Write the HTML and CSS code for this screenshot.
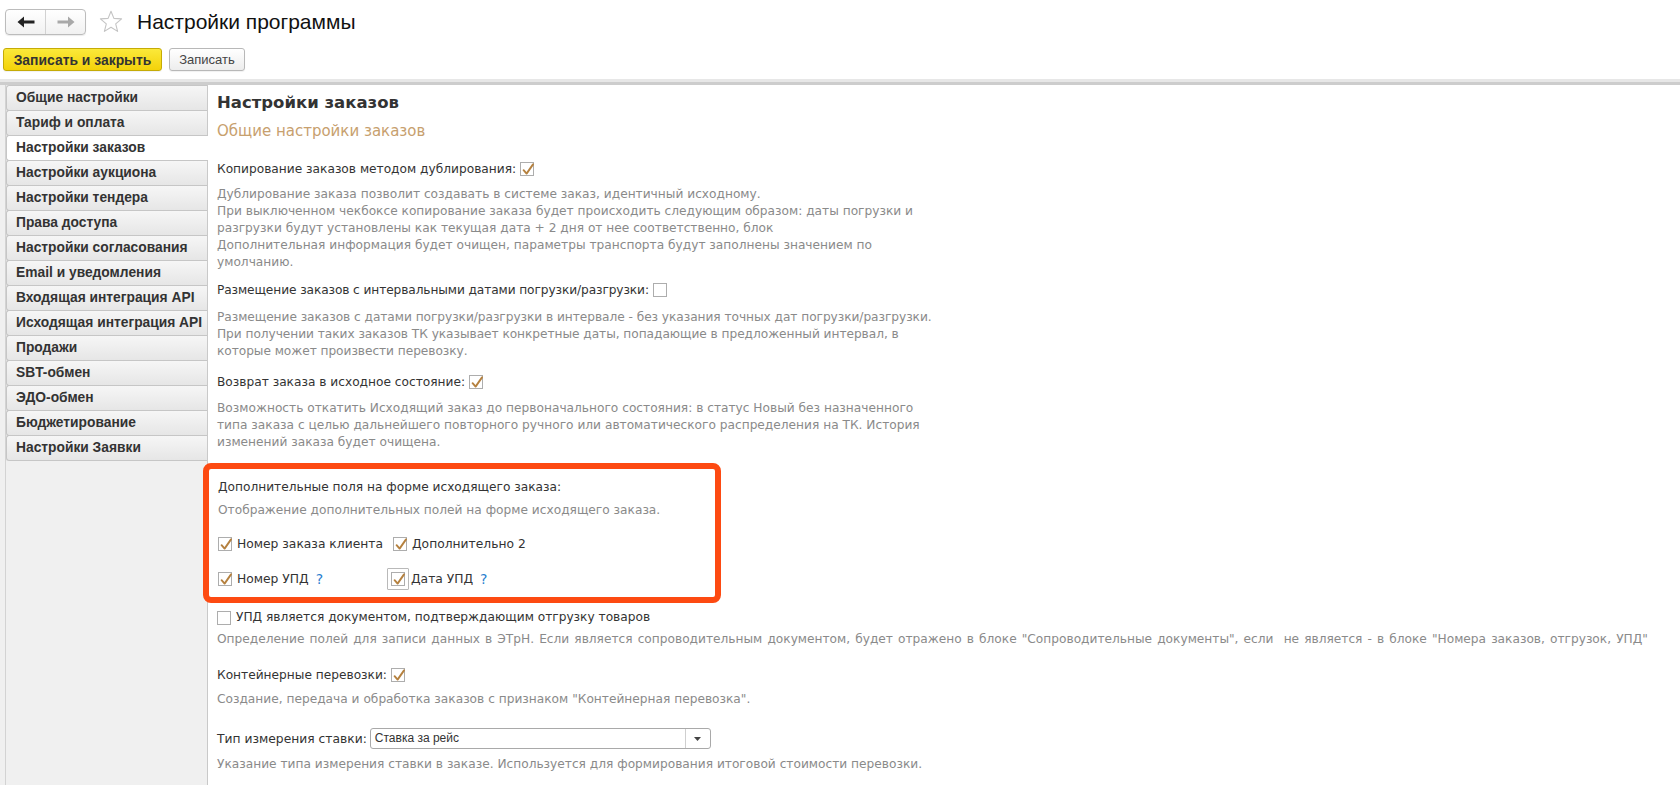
FILE: index.html
```html
<!DOCTYPE html>
<html lang="ru">
<head>
<meta charset="utf-8">
<title>Настройки программы</title>
<link rel="stylesheet" href="styles.css">
</head>
<body>
<div class="app">
  <header class="titlebar">
    <div class="nav">
      <button class="nav-btn back" type="button">
        <svg width="18" height="12" viewBox="0 0 18 12"><path d="M0.5 6 L7 0.5 V4.4 H17.5 V7.6 H7 V11.5 Z" fill="#222"/></svg>
      </button>
      <button class="nav-btn fwd" type="button">
        <svg width="18" height="12" viewBox="0 0 18 12"><path d="M17.5 6 L11 0.5 V4.4 H0.5 V7.6 H11 V11.5 Z" fill="#a9a9a9"/></svg>
      </button>
    </div>
    <svg class="star" width="24" height="24" viewBox="0 0 24 24"><polygon points="12,1.2 14.9,8.4 22.6,8.9 16.7,13.8 18.6,21.4 12,17.2 5.4,21.4 7.3,13.8 1.4,8.9 9.1,8.4" fill="none" stroke="#c4c4c4" stroke-width="1.1" stroke-linejoin="round"/></svg>
    <h1 class="title">Настройки программы</h1>
  </header>

  <div class="toolbar">
    <button class="btn btn-primary" type="button">Записать и закрыть</button>
    <button class="btn" type="button">Записать</button>
  </div>
  <div class="sep"></div>

  <div class="main">
    <nav class="sidebar">
      <ul class="tabs">
        <li class="tab">Общие настройки</li>
        <li class="tab">Тариф и оплата</li>
        <li class="tab active">Настройки заказов</li>
        <li class="tab">Настройки аукциона</li>
        <li class="tab">Настройки тендера</li>
        <li class="tab">Права доступа</li>
        <li class="tab">Настройки согласования</li>
        <li class="tab">Email и уведомления</li>
        <li class="tab">Входящая интеграция API</li>
        <li class="tab">Исходящая интеграция API</li>
        <li class="tab">Продажи</li>
        <li class="tab">SBT-обмен</li>
        <li class="tab">ЭДО-обмен</li>
        <li class="tab">Бюджетирование</li>
        <li class="tab">Настройки Заявки</li>
      </ul>
    </nav>

    <section class="content">
      <h2 class="heading">Настройки заказов</h2>
      <h3 class="subheading">Общие настройки заказов</h3>

      <div class="field f1">Копирование заказов методом дублирования: <span class="cb"><svg viewBox="0 0 14 14"><path d="M2.6 7.2 L5.6 10.6 L12 1.4"/></svg></span></div>
      <p class="desc d1">Дублирование заказа позволит создавать в системе заказ, идентичный исходному.<br>При выключенном чекбоксе копирование заказа будет происходить следующим образом: даты погрузки и<br>разгрузки будут установлены как текущая дата + 2 дня от нее соответственно, блок<br>Дополнительная информация будет очищен, параметры транспорта будут заполнены значением по<br>умолчанию.</p>

      <div class="field f2">Размещение заказов с интервальными датами погрузки/разгрузки: <span class="cb empty"></span></div>
      <p class="desc d2">Размещение заказов с датами погрузки/разгрузки в интервале - без указания точных дат погрузки/разгрузки.<br>При получении таких заказов ТК указывает конкретные даты, попадающие в предложенный интервал, в<br>которые может произвести перевозку.</p>

      <div class="field f3">Возврат заказа в исходное состояние: <span class="cb"><svg viewBox="0 0 14 14"><path d="M2.6 7.2 L5.6 10.6 L12 1.4"/></svg></span></div>
      <p class="desc d3">Возможность откатить Исходящий заказ до первоначального состояния: в статус Новый без назначенного<br>типа заказа с целью дальнейшего повторного ручного или автоматического распределения на ТК. История<br>изменений заказа будет очищена.</p>

      <div class="highlight">
        <div class="field hl-title">Дополнительные поля на форме исходящего заказа:</div>
        <p class="desc hl-desc">Отображение дополнительных полей на форме исходящего заказа.</p>
        <div class="cb-row r1">
          <label class="cb-item first"><span class="cb"><svg viewBox="0 0 14 14"><path d="M2.6 7.2 L5.6 10.6 L12 1.4"/></svg></span><span class="cb-text">Номер заказа клиента</span></label>
          <label class="cb-item"><span class="cb"><svg viewBox="0 0 14 14"><path d="M2.6 7.2 L5.6 10.6 L12 1.4"/></svg></span><span class="cb-text">Дополнительно 2</span></label>
        </div>
        <div class="cb-row r2">
          <label class="cb-item first"><span class="cb"><svg viewBox="0 0 14 14"><path d="M2.6 7.2 L5.6 10.6 L12 1.4"/></svg></span><span class="cb-text">Номер УПД</span><span class="hint">?</span></label>
          <label class="cb-item focused"><span class="focus-frame"><span class="cb"><svg viewBox="0 0 14 14"><path d="M2.6 7.2 L5.6 10.6 L12 1.4"/></svg></span></span><span class="cb-text">Дата УПД</span><span class="hint">?</span></label>
        </div>
      </div>

      <label class="field cb-line f4"><span class="cb empty"></span><span class="cb-text">УПД является документом, подтверждающим отгрузку товаров</span></label>
      <p class="desc d4">Определение полей для записи данных в ЭТрН. Если является сопроводительным документом, будет отражено в блоке "Сопроводительные документы", если&nbsp; не является - в блоке "Номера заказов, отгрузок, УПД"</p>

      <div class="field f5">Контейнерные перевозки: <span class="cb"><svg viewBox="0 0 14 14"><path d="M2.6 7.2 L5.6 10.6 L12 1.4"/></svg></span></div>
      <p class="desc d5">Создание, передача и обработка заказов с признаком "Контейнерная перевозка".</p>

      <div class="select-row">
        <span class="select-label">Тип измерения ставки:</span>
        <div class="select">
          <span class="select-value">Ставка за рейс</span>
          <span class="select-btn"><svg width="7" height="4" viewBox="0 0 7 4"><path d="M0 0 H7 L3.5 4 Z" fill="#444"/></svg></span>
        </div>
      </div>
      <p class="desc d6">Указание типа измерения ставки в заказе. Используется для формирования итоговой стоимости перевозки.</p>
    </section>
  </div>
</div>
</body>
</html>
```

FILE: styles.css
```css
html, body {
  margin: 0;
  padding: 0;
}
body {
  background: #fff;
  font-family: "DejaVu Sans", Verdana, sans-serif;
  color: #333;
  width: 1680px;
  height: 785px;
  overflow: hidden;
}
.app {
  display: flex;
  flex-direction: column;
  height: 785px;
}

/* title bar */
.titlebar {
  height: 44px;
  display: flex;
  align-items: flex-start;
  flex-shrink: 0;
}
.nav {
  margin: 9px 0 0 5px;
  width: 81px;
  height: 26px;
  box-sizing: border-box;
  display: flex;
  border: 1px solid #bcbcbc;
  border-radius: 4px;
  background: linear-gradient(#ffffff, #f1f1f1);
  box-shadow: 0 1px 1px rgba(0,0,0,0.08);
}
.nav-btn {
  border: 0;
  margin: 0;
  padding: 0;
  background: transparent;
  display: flex;
  align-items: center;
  justify-content: center;
  width: 39px;
}
.nav-btn.fwd {
  flex: 1;
  border-left: 1px solid #d2d2d2;
}
.star {
  margin: 10px 0 0 13px;
  flex-shrink: 0;
}
.title {
  margin: 9px 0 0 14px;
  font-family: "Liberation Sans", Arial, sans-serif;
  font-weight: normal;
  font-size: 21px;
  line-height: 26px;
  color: #111;
}

/* toolbar */
.toolbar {
  display: flex;
  gap: 7px;
  margin-top: 4px;
  padding-left: 3px;
  height: 23px;
  flex-shrink: 0;
}
.btn {
  height: 23px;
  box-sizing: border-box;
  width: 76px;
  margin: 0;
  padding: 0;
  border: 1px solid #b8b8b8;
  border-radius: 3px;
  background: linear-gradient(#ffffff, #ededed);
  font-family: "Liberation Sans", Arial, sans-serif;
  font-size: 13px;
  color: #444;
  box-shadow: 0 1px 1px rgba(0,0,0,0.06);
}
.btn-primary {
  width: 159px;
  background: linear-gradient(#fbe93a, #f3d20a);
  border-color: #c5ab06;
  font-weight: bold;
  font-size: 13.9px;
  color: #333;
}

.sep {
  margin-top: 8px;
  height: 6px;
  flex-shrink: 0;
  background: linear-gradient(#e7e7e7 0, #e7e7e7 50%, #cdcdcd 50%, #cdcdcd 100%);
}

/* main */
.main {
  display: flex;
  flex: 1;
  min-height: 0;
}
.sidebar {
  width: 208px;
  box-sizing: border-box;
  flex-shrink: 0;
  background: #f0f0f0;
  border-right: 1px solid #c9c9c9;
  padding-left: 5px;
}
.tabs {
  list-style: none;
  margin: 0;
  padding: 0;
  height: 100%;
  border-left: 1px solid #d3d3d3;
}
.tab {
  height: 26px;
  box-sizing: border-box;
  margin-top: -1px;
  border: 1px solid #c6c6c6;
  border-right: none;
  border-radius: 3px 0 0 3px;
  background: linear-gradient(#f6f6f6, #e6e6e6);
  font-family: "Liberation Sans", Arial, sans-serif;
  font-weight: bold;
  font-size: 13.8px;
  line-height: 24px;
  color: #333;
  padding-left: 9px;
  white-space: nowrap;
}
.tab:first-child {
  margin-top: 0;
}
.tab.active {
  background: #fff;
  margin-right: -1px;
  position: relative;
}

/* content */
.content {
  flex: 1;
  padding: 8px 0 0 9px;
  min-width: 0;
}
.heading {
  margin: 0;
  font-size: 16.5px;
  line-height: 20px;
  font-weight: bold;
  color: #333;
}
.subheading {
  margin: 8px 0 0 0;
  font-size: 15px;
  line-height: 20px;
  font-weight: normal;
  color: #c7a06e;
}
.field {
  font-size: 12.2px;
  line-height: 17px;
  color: #333;
  white-space: nowrap;
}
.desc {
  margin: 0;
  font-size: 12.2px;
  line-height: 17px;
  color: #8a8a8a;
  white-space: nowrap;
}

.f1 { margin-top: 20px; }
.d1 { margin-top: 8px; }
.f2 { margin-top: 11px; letter-spacing: -0.1px; }
.d2 { margin-top: 10px; letter-spacing: -0.05px; }
.f3 { margin-top: 14px; }
.d3 { margin-top: 9px; }

.cb {
  display: inline-block;
  width: 14px;
  height: 14px;
  box-sizing: border-box;
  border: 1px solid #adadad;
  background: #fff;
  vertical-align: -3px;
  position: relative;
}
.cb svg {
  position: absolute;
  left: 0;
  top: 0;
  width: 14px;
  height: 14px;
  overflow: visible;
}
.cb svg path {
  fill: none;
  stroke: #b5813f;
  stroke-width: 1.9;
  stroke-linecap: round;
  stroke-linejoin: round;
}

/* highlighted group */
.highlight {
  margin: 12px 0 0 -14px;
  width: 518px;
  box-sizing: border-box;
  border: 6px solid #fd4a12;
  border-radius: 8px;
  padding: 10px 0 8px 9px;
  position: relative;
}
.hl-desc { margin-top: 6px; }
.cb-row {
  display: flex;
  align-items: center;
  height: 20px;
}
.r1 { margin-top: 15px; }
.r2 { margin-top: 15px; }
.cb-item {
  display: flex;
  align-items: center;
  font-size: 12.3px;
  color: #333;
  white-space: nowrap;
}
.cb-item.first {
  width: 175px;
}
.cb-item.focused {
  margin-left: -6px;
}
.cb-text {
  margin-left: 5px;
}
.focus-frame {
  display: flex;
  align-items: center;
  justify-content: center;
  width: 22px;
  height: 22px;
  box-sizing: border-box;
  border: 1px solid #b9b9b9;
  border-radius: 1px;
}
.focus-frame + .cb-text {
  margin-left: 2px;
}
.hint {
  color: #2a80cf;
  margin-left: 7px;
  font-size: 14px;
}

.cb-line {
  display: flex;
  align-items: center;
  margin-top: 6px;
}
.d4 { margin-top: 5px; word-spacing: 1.2px; }
.f5 { margin-top: 19px; }
.d5 { margin-top: 7px; }

.select-row {
  display: flex;
  align-items: center;
  margin-top: 20px;
  height: 21px;
}
.select-label {
  font-size: 12.3px;
  color: #333;
  white-space: nowrap;
}
.select {
  margin-left: 3px;
  width: 341px;
  height: 21px;
  box-sizing: border-box;
  border: 1px solid #a9a9a9;
  border-radius: 3px;
  display: flex;
  background: #fff;
}
.select-value {
  flex: 1;
  font-family: "Liberation Sans", Arial, sans-serif;
  font-size: 12px;
  line-height: 19px;
  padding-left: 4px;
  color: #333;
}
.select-btn {
  width: 24px;
  border-left: 1px solid #cfcfcf;
  display: flex;
  align-items: center;
  justify-content: center;
}
.d6 { margin-top: 7px; }
```
